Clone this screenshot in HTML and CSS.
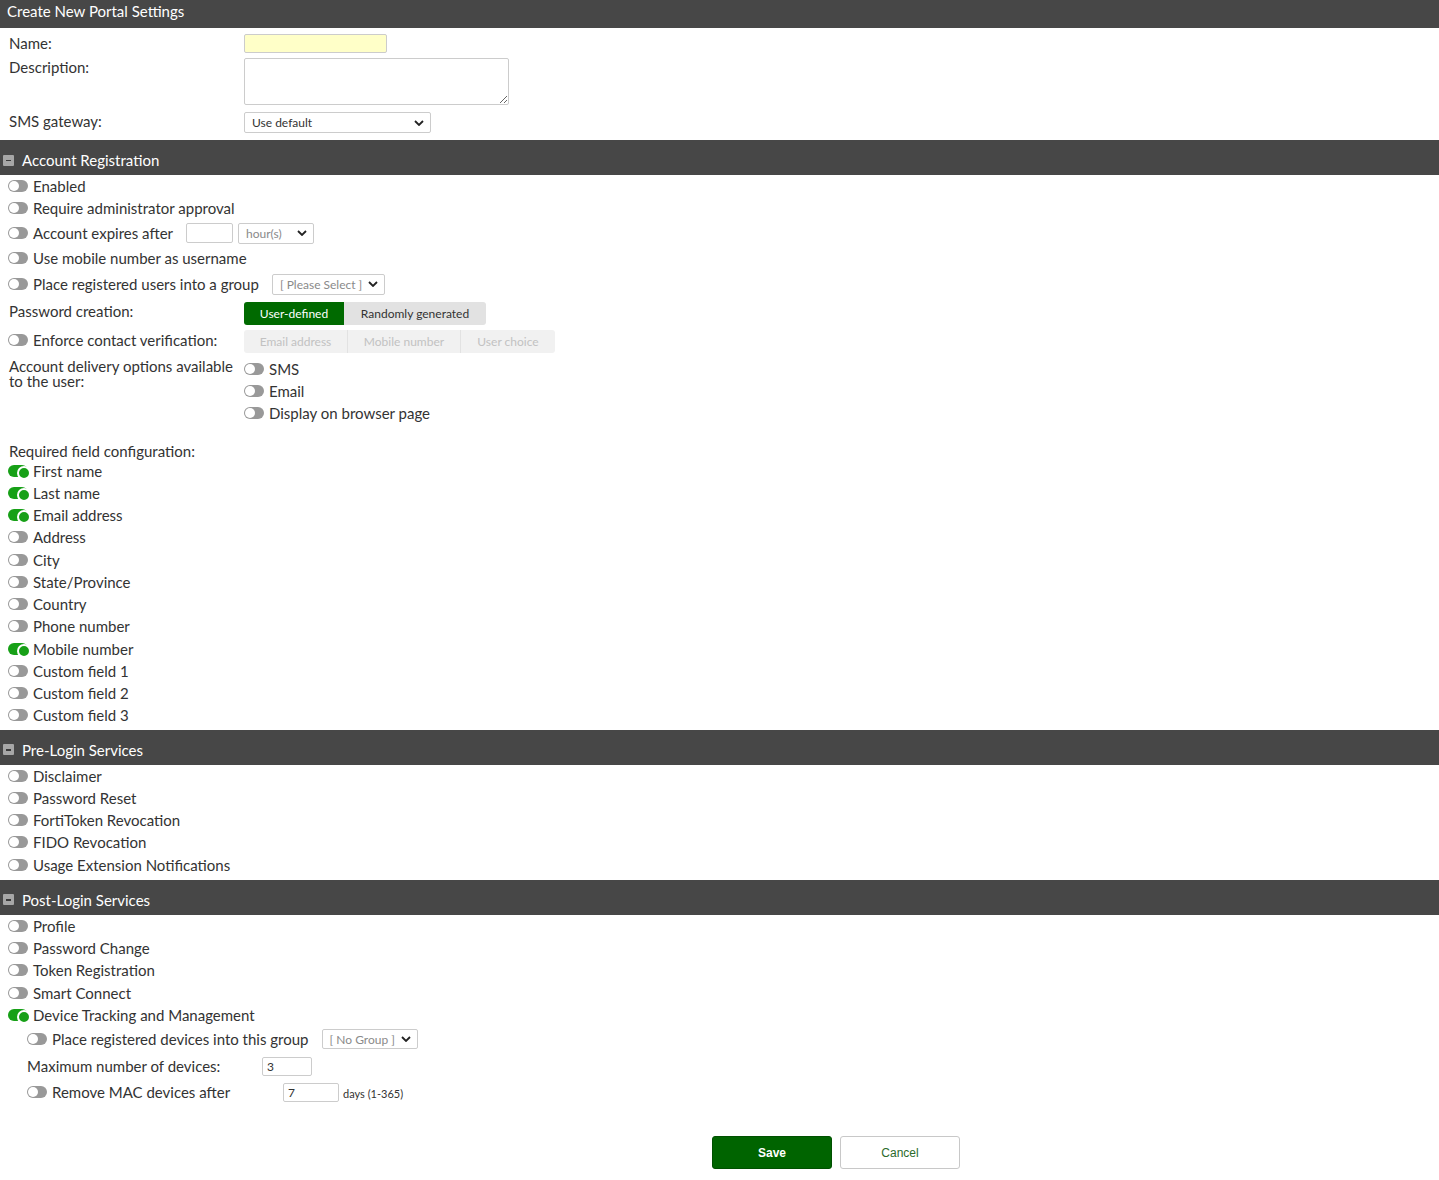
FILE: index.html
```html
<!DOCTYPE html>
<html>
<head>
<meta charset="utf-8">
<link rel="stylesheet" href="styles.css">
</head>
<body>
<div class="titlebar">Create New Portal Settings</div>

<div class="top">
  <div class="frow r-name"><span class="lbl">Name:</span><input class="inp inp-name" type="text"></div>
  <div class="frow r-desc"><span class="lbl">Description:</span><textarea class="ta"></textarea></div>
  <div class="frow r-sms"><span class="lbl">SMS gateway:</span>
    <div class="sel sel-sms"><span>Use default</span><svg class="chev" viewBox="0 0 10 6"><path d="M1 1l4 4 4-4" fill="none" stroke="#222" stroke-width="1.8"/></svg></div>
  </div>
</div>

<div class="sechead"><span class="minus"></span>Account Registration</div>
<div class="secbody reg">
  <div class="trow"><span class="tg"></span>Enabled</div>
  <div class="trow"><span class="tg"></span>Require administrator approval</div>
  <div class="trow r-exp"><span class="tg"></span>Account expires after<input class="inp inp-exp" type="text">
    <div class="sel sel-hour"><span class="ph">hour(s)</span><svg class="chev" viewBox="0 0 10 6"><path d="M1 1l4 4 4-4" fill="none" stroke="#222" stroke-width="1.8"/></svg></div>
  </div>
  <div class="trow"><span class="tg"></span>Use mobile number as username</div>
  <div class="trow r-place"><span class="tg"></span>Place registered users into a group
    <div class="sel sel-group"><span class="ph">[ Please Select ]</span><svg class="chev" viewBox="0 0 10 6"><path d="M1 1l4 4 4-4" fill="none" stroke="#222" stroke-width="1.8"/></svg></div>
  </div>
  <div class="crow r-pw"><span class="clbl">Password creation:</span>
    <div class="seg"><span class="segb active b-user">User-defined</span><span class="segb b-rand">Randomly generated</span></div>
  </div>
  <div class="crow r-enf"><span class="clbl"><span class="tg"></span>Enforce contact verification:</span>
    <div class="seg dis"><span class="segb b-email">Email address</span><span class="segb b-mob">Mobile number</span><span class="segb b-uc">User choice</span></div>
  </div>
  <div class="crow r-del"><span class="clbl multi">Account delivery options available to the user:</span>
    <div class="opts">
      <div class="trow"><span class="tg"></span>SMS</div>
      <div class="trow"><span class="tg"></span>Email</div>
      <div class="trow"><span class="tg"></span>Display on browser page</div>
    </div>
  </div>
  <div class="plainrow r-req">Required field configuration:</div>
  <div class="list">
    <div class="trow"><span class="tg on"></span>First name</div>
    <div class="trow"><span class="tg on"></span>Last name</div>
    <div class="trow"><span class="tg on"></span>Email address</div>
    <div class="trow"><span class="tg"></span>Address</div>
    <div class="trow"><span class="tg"></span>City</div>
    <div class="trow"><span class="tg"></span>State/Province</div>
    <div class="trow"><span class="tg"></span>Country</div>
    <div class="trow"><span class="tg"></span>Phone number</div>
    <div class="trow"><span class="tg on"></span>Mobile number</div>
    <div class="trow"><span class="tg"></span>Custom field 1</div>
    <div class="trow"><span class="tg"></span>Custom field 2</div>
    <div class="trow"><span class="tg"></span>Custom field 3</div>
  </div>
</div>

<div class="sechead"><span class="minus"></span>Pre-Login Services</div>
<div class="secbody pre">
  <div class="trow"><span class="tg"></span>Disclaimer</div>
  <div class="trow"><span class="tg"></span>Password Reset</div>
  <div class="trow"><span class="tg"></span>FortiToken Revocation</div>
  <div class="trow"><span class="tg"></span>FIDO Revocation</div>
  <div class="trow"><span class="tg"></span>Usage Extension Notifications</div>
</div>

<div class="sechead"><span class="minus"></span>Post-Login Services</div>
<div class="secbody post">
  <div class="trow"><span class="tg"></span>Profile</div>
  <div class="trow"><span class="tg"></span>Password Change</div>
  <div class="trow"><span class="tg"></span>Token Registration</div>
  <div class="trow"><span class="tg"></span>Smart Connect</div>
  <div class="trow"><span class="tg on"></span>Device Tracking and Management</div>
  <div class="sub">
    <div class="srow"><span class="tg"></span>Place registered devices into this group
      <div class="sel sel-nogroup"><span class="ph">[ No Group ]</span><svg class="chev" viewBox="0 0 10 6"><path d="M1 1l4 4 4-4" fill="none" stroke="#222" stroke-width="1.8"/></svg></div>
    </div>
    <div class="srow r-max"><span class="slbl">Maximum number of devices:</span><input class="inp inp-small inp-max" type="text" value="3"></div>
    <div class="srow"><span class="slbl2"><span class="tg"></span>Remove MAC devices after</span><input class="inp inp-small inp-mac" type="text" value="7"><span class="hint">days (1-365)</span></div>
  </div>
</div>

<div class="actions">
  <button class="btn save">Save</button>
  <button class="btn cancel">Cancel</button>
</div>
</body>
</html>
```

FILE: styles.css
```css
* { box-sizing: border-box; }
body {
  margin: 0;
  font-family: Lato, "Open Sans", sans-serif;
  font-size: 15px;
  color: #333;
  background: #fff;
}
.titlebar {
  height: 28px;
  background: #474747;
  color: #fff;
  font-size: 15px;
  line-height: 23px;
  padding-left: 7px;
}
.top { padding: 6px 0 7px 9px; }
.frow { display: flex; align-items: center; }
.lbl { width: 235px; line-height: 18px; }
.r-name .lbl { position: relative; top: -1px; }
.r-desc { margin-top: 5px; align-items: flex-start; }
.r-sms { margin-top: 7px; }
.r-sms .lbl { position: relative; top: -2px; }
.inp {
  border: 1px solid #ccc;
  border-radius: 2px;
  font-family: Lato, sans-serif;
  font-size: 12px;
  color: #333;
  padding: 0 4px;
  outline: none;
}
.inp-name { width: 143px; height: 19px; background: #ffffc8; }
.ta {
  width: 265px; height: 47px;
  border: 1px solid #ccc; border-radius: 2px;
  resize: both; display: block;
}
.sel {
  display: flex; align-items: center; justify-content: space-between;
  border: 1px solid #ccc; border-radius: 2px;
  height: 21px; font-size: 12px; color: #333;
  padding: 0 6px 0 7px; background: #fff;
}
.sel .ph { color: #8a8a8a; }
.chev { width: 10px; height: 6px; display: block; }
.sel-sms { width: 187px; }
.sel-hour { width: 76px; margin-left: 5px; }
.sel-group { width: 113px; margin-left: 13px; }
.sel-nogroup { width: 96px; margin-left: 13px; height: 20px; }

.sechead {
  height: 35px; background: #474747; color: #fff;
  display: flex; align-items: center; font-size: 15px;
  padding: 5px 0 0 3px;
}
.minus {
  width: 11px; height: 11px; background: #a6a6a6; border-radius: 1px;
  margin-right: 8px; position: relative;
}
.minus::after {
  content: ""; position: absolute; left: 3px; top: 5px; width: 5px; height: 1.5px; background: #3a3a3a;
}
.secbody { padding-left: 8px; }
.secbody.reg { padding-bottom: 3px; }
.secbody.pre { padding-bottom: 4px; }

.trow { display: flex; align-items: center; height: 22.25px; white-space: nowrap; }
.tg {
  display: inline-block; flex: none;
  width: 20px; height: 12px; border-radius: 6px;
  background: #999; position: relative; margin-right: 5px;
}
.tg::after {
  content: ""; position: absolute; left: 1px; top: 1px;
  width: 10px; height: 10px; border-radius: 50%;
  background: #fff;
}
.tg.on { background: #17a017; }
.tg.on::after {
  left: 9px; top: 1px; width: 10px; height: 10px;
  background: #17a017; border: 2px solid #fff;
}
.r-exp { height: 27px; }
.inp-exp { width: 47px; height: 20px; margin-left: 13px; }
.r-place { height: 31px; }

.crow { display: flex; align-items: flex-start; }
.clbl { width: 236px; flex: none; display: flex; align-items: center; padding-left: 1px; line-height: 18px; }
.clbl .tg { margin-left: -1px; }
.r-pw { margin-top: 2px; }
.r-enf { margin-top: 5px; }
.r-enf .clbl { line-height: 21px; }
.r-del { margin-top: 5px; }
.clbl.multi { display: block; line-height: 15px; padding-top: 1px; width: 236px; }
.seg { display: flex; height: 23px; border-radius: 3px; overflow: hidden; font-size: 12px; }
.segb { display: flex; align-items: center; justify-content: center; }
.b-user { width: 100px; background: #006a00; color: #fff; }
.b-rand { width: 142px; background: #e2e2e2; color: #333; }
.seg.dis { background: #f1f1f1; color: #c2c2c2; }
.b-email { width: 104px; border-right: 1px solid #e2e2e2; }
.b-mob { width: 113px; border-right: 1px solid #e2e2e2; }
.b-uc { width: 94px; }

.plainrow { padding-left: 1px; }
.r-req { margin-top: 16px; height: 20px; line-height: 20px; }
.list { margin-top: -1px; }

.sub { padding-left: 19px; }
.srow { display: flex; align-items: center; height: 26px; white-space: nowrap; }
.r-max { height: 27px; padding-top: 1px; }
.slbl { width: 235px; }
.slbl2 { width: 256px; display: flex; align-items: center; }
.inp-small { height: 19px; }
.inp-max { width: 50px; }
.inp-mac { width: 56px; }
.hint { font-size: 11px; margin-left: 4px; color: #333; padding-top: 2px; }

.actions { display: flex; gap: 8px; padding: 31px 0 0 712px; }
.btn {
  width: 120px; height: 33px; border-radius: 3px;
  font-family: "Liberation Sans", Arial, sans-serif; font-size: 12px;
}
.save { background: #006400; color: #fff; border: 1px solid #005000; font-weight: bold; }
.cancel { background: #fff; color: #2b6b2b; border: 1px solid #c8c8c8; }
```
